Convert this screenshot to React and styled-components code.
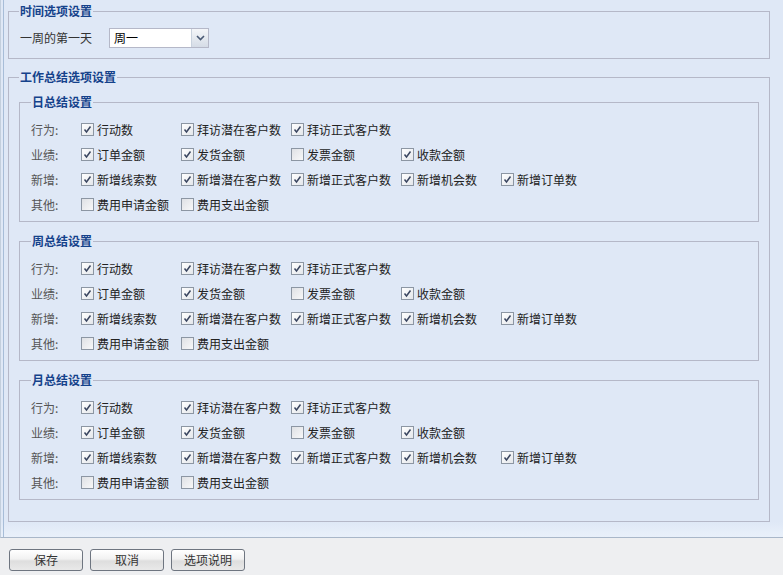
import React from "react";
import styled, { createGlobalStyle } from "styled-components";

const Global = createGlobalStyle`
  html, body { margin: 0; padding: 0; }
  body {
    background: #eeeff1;
    font-family: "Noto Sans CJK SC", "Noto Sans", sans-serif;
    font-size: 12px;
    color: #222;
    width: 783px;
    height: 575px;
    overflow: hidden;
  }
`;

const Page = styled.div`
  width: 783px;
  height: 575px;
  display: flex;
  flex-direction: column;
  box-sizing: border-box;
`;

const Outer = styled.div`
  height: 538px;
  box-sizing: border-box;
  border-left: 1px solid #c3cfdd;
  border-bottom: 1px solid #a9b7c9;
  background: linear-gradient(to bottom, #dfe8f6 0, #dfe8f6 522px, #e6eef9 532px, #e9f0fa 537px);
  padding-left: 2px;
  display: flex;
`;

const Panel = styled.div`
  flex: 1;
  border-left: 1px solid #a7bdd8;
  padding: 4px 13px 0 4px;
  display: flex;
  flex-direction: column;
`;

const Fieldset = styled.fieldset`
  margin: ${(p) => p.$mt || 0}px 0 0 0;
  border: 1px solid #b5b8c8;
  padding: ${(p) => p.$pad};
  min-width: 0;
`;

const Legend = styled.legend`
  padding: 0 ${(p) => p.$lp || 1}px;
  font-weight: bold;
  font-size: 12px;
  line-height: 14px;
  color: #15428b;
`;

const WeekRow = styled.div`
  display: flex;
  align-items: center;
  height: 20px;
`;

const WeekLabel = styled.span`
  width: 89px;
  padding-left: 1px;
  color: #333;
  line-height: 20px;
`;

const Select = styled.div`
  width: 100px;
  height: 20px;
  box-sizing: border-box;
  border: 1px solid #b5b8c8;
  background: #fff;
  display: flex;
  align-items: stretch;
`;

const SelectText = styled.span`
  flex: 1;
  padding-left: 4px;
  line-height: 18px;
  color: #000;
`;

const SelectBtn = styled.span`
  width: 16px;
  border-left: 1px solid #c9d2de;
  background: linear-gradient(to bottom, #f4f6f9, #d5dce6);
  display: flex;
  align-items: center;
  justify-content: center;
`;

const Grid = styled.div`
  display: grid;
  grid-template-columns: 50px 100px 110px 110px 100px 1fr;
  grid-auto-rows: 25px;
  align-items: center;
`;

const RowLabel = styled.span`
  grid-column: 1;
  color: #555;
  line-height: 25px;
`;

const Item = styled.label`
  display: flex;
  align-items: center;
  gap: 3px;
  white-space: nowrap;
  color: #222;
`;

const Box = styled.span`
  width: 11px;
  height: 11px;
  border: 1px solid #8c96a3;
  background: ${(p) =>
    p.$on
      ? "linear-gradient(135deg, #ffffff, #e4e7eb)"
      : "linear-gradient(135deg, #dfe1e5, #f8f8f9)"};
  display: flex;
  align-items: center;
  justify-content: center;
  flex: none;
`;

const Toolbar = styled.div`
  flex: 1;
  display: flex;
  gap: 7px;
  padding: 11px 0 0 9px;
  align-items: flex-start;
`;

const Button = styled.button`
  width: 74px;
  height: 22px;
  box-sizing: border-box;
  border: 1px solid #6e7580;
  border-radius: 3px;
  background: linear-gradient(to bottom, #ffffff 0%, #f2f2f2 45%, #dedede 55%, #e9e9e9 100%);
  font-family: inherit;
  font-size: 12px;
  color: #333;
  padding: 0;
  line-height: 20px;
`;

const sections = ["日总结设置", "周总结设置", "月总结设置"];

const rows = [
  ["行为:", [["行动数", 1], ["拜访潜在客户数", 1], ["拜访正式客户数", 1]]],
  ["业绩:", [["订单金额", 1], ["发货金额", 1], ["发票金额", 0], ["收款金额", 1]]],
  ["新增:", [["新增线索数", 1], ["新增潜在客户数", 1], ["新增正式客户数", 1], ["新增机会数", 1], ["新增订单数", 1]]],
  ["其他:", [["费用申请金额", 0], ["费用支出金额", 0]]],
];

function Check({ on }) {
  return (
    <Box $on={on}>
      {on ? (
        <svg width="9" height="9" viewBox="0 0 9 9">
          <path d="M1.5 4.5 L3.5 7 L7.5 1.5" fill="none" stroke="#3a4660" strokeWidth="1.5" />
        </svg>
      ) : null}
    </Box>
  );
}

function Section({ title, mt }) {
  return (
    <Fieldset $mt={mt} $pad="8px 10px 4px 11px">
      <Legend $lp={1}>{title}</Legend>
      <Grid>
        {rows.map(([label, items], ri) => (
          <React.Fragment key={ri}>
            <RowLabel style={{ gridRow: ri + 1 }}>{label}</RowLabel>
            {items.map(([t, on], ci) => (
              <Item key={t} style={{ gridRow: ri + 1, gridColumn: ci + 2 }}>
                <Check on={!!on} />
                {t}
              </Item>
            ))}
          </React.Fragment>
        ))}
      </Grid>
    </Fieldset>
  );
}

export default function App() {
  return (
    <Page>
      <Global />
      <Outer>
        <Panel>
          <Fieldset $pad="10px 10px 10px 10px">
            <Legend>时间选项设置</Legend>
            <WeekRow>
              <WeekLabel>一周的第一天</WeekLabel>
              <Select>
                <SelectText>周一</SelectText>
                <SelectBtn>
                  <svg width="9" height="6" viewBox="0 0 9 6">
                    <path d="M1 1 L4.5 4.5 L8 1" fill="none" stroke="#4a5a75" strokeWidth="1.6" />
                  </svg>
                </SelectBtn>
              </Select>
            </WeekRow>
          </Fieldset>
          <Fieldset $mt={11} $pad="11px 10px 21px 10px">
            <Legend>工作总结选项设置</Legend>
            {sections.map((s, i) => (
              <Section key={s} title={s} mt={i === 0 ? 0 : 12} />
            ))}
          </Fieldset>
        </Panel>
      </Outer>
      <Toolbar>
        <Button>保存</Button>
        <Button>取消</Button>
        <Button>选项说明</Button>
      </Toolbar>
    </Page>
  );
}
